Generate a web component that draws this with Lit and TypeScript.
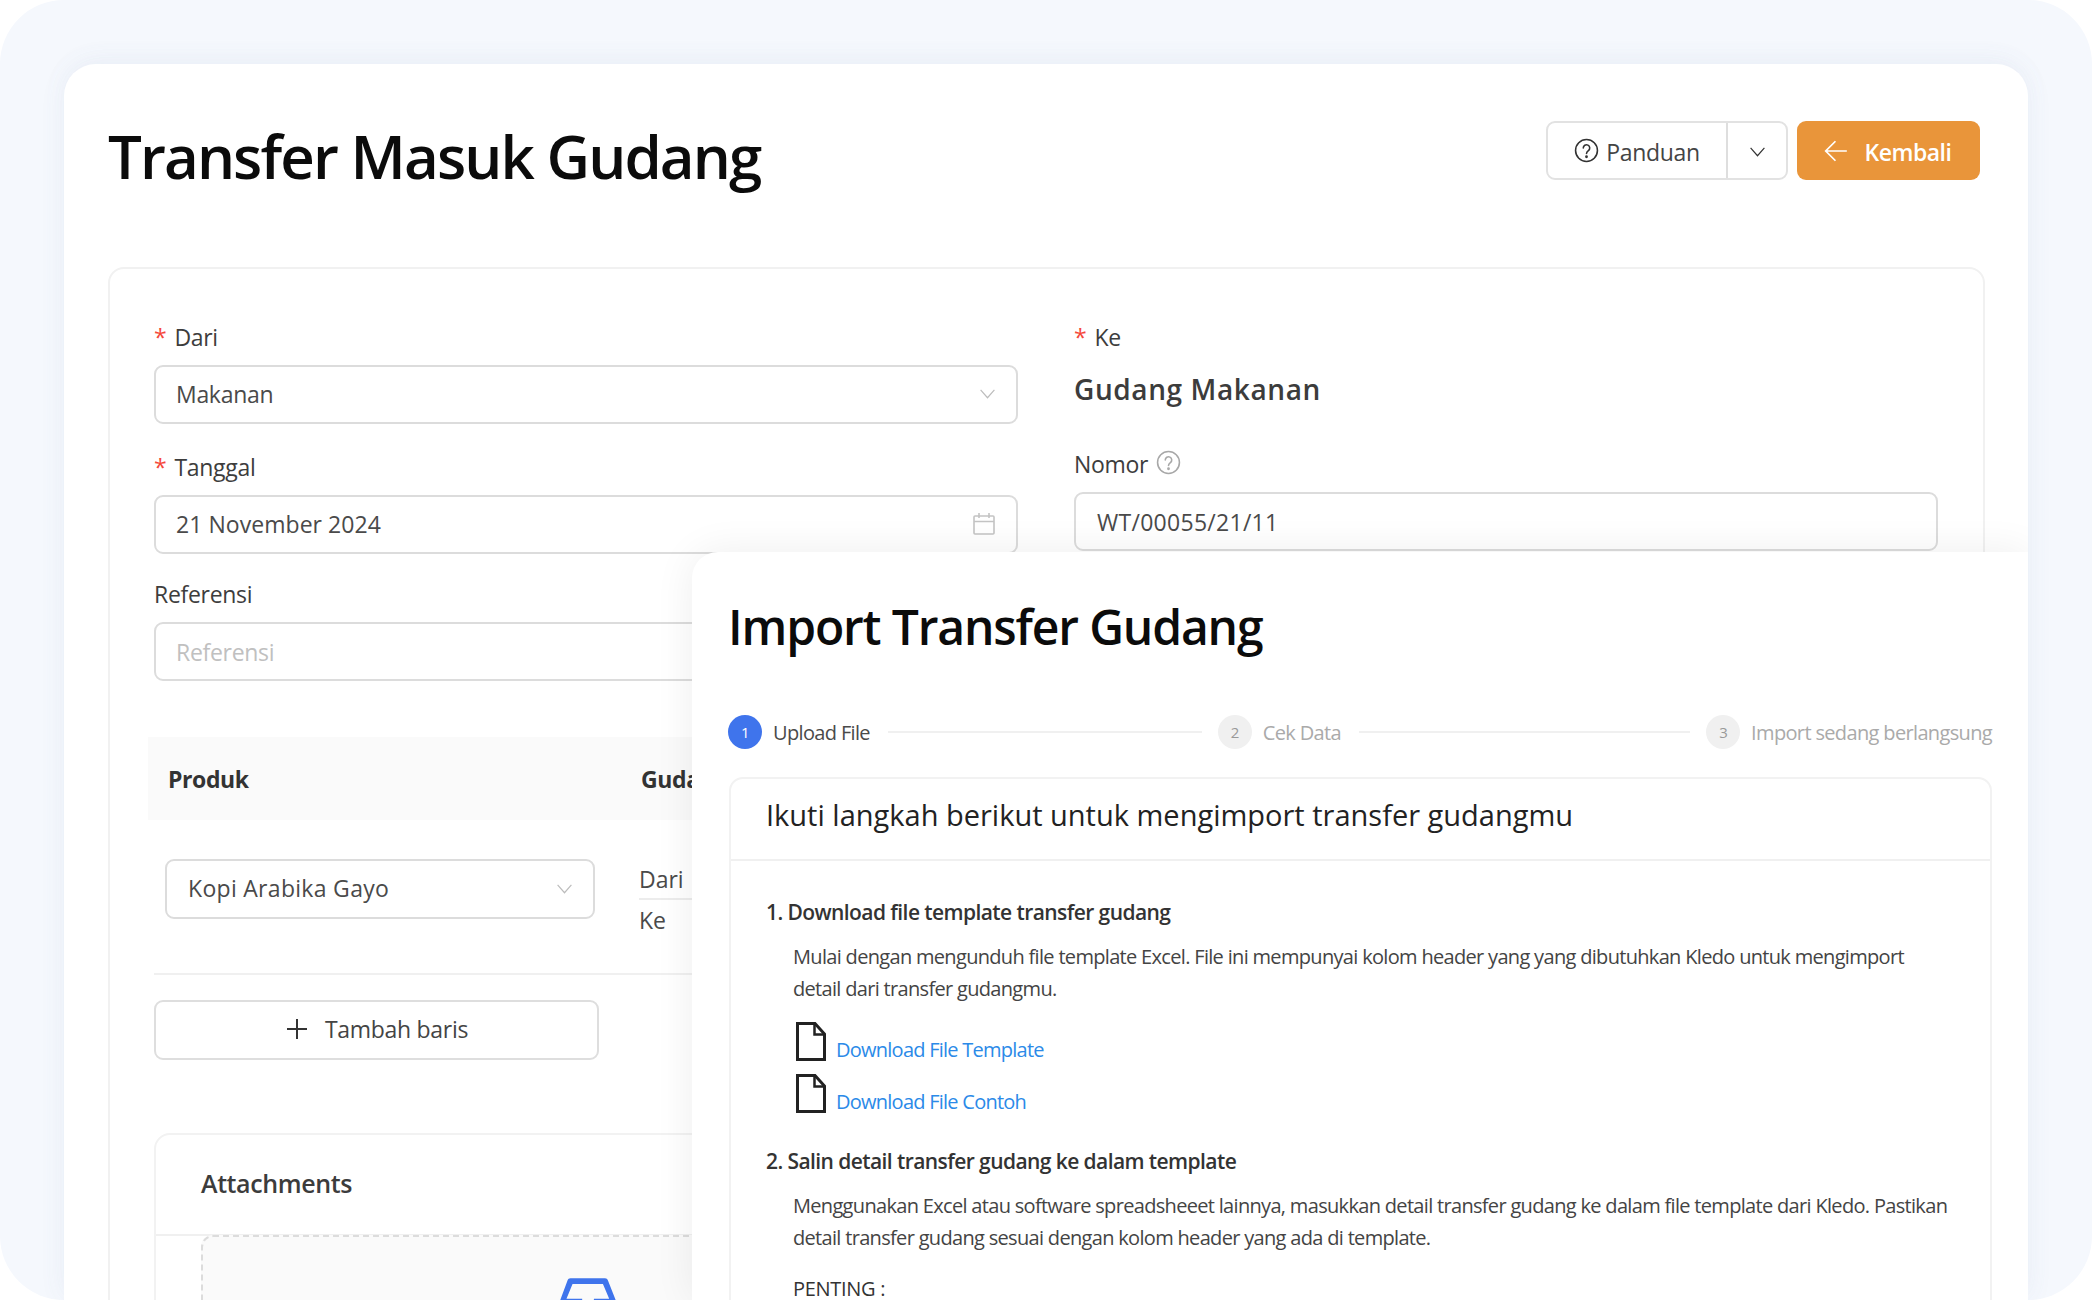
import { LitElement, html, css, svg } from "lit";
import { customElement } from "lit/decorators.js";

const chevron = (cls: string) => html`<svg class=${cls} viewBox="0 0 16 16" fill="none" stroke="currentColor" stroke-width="1.1"><path d="M1.5 4.5 8 12l6.5-7.5"/></svg>`;
const help = (cls: string) => html`<svg class=${cls} viewBox="0 0 24 24" fill="none" stroke="currentColor" stroke-width="1.5"><circle cx="12" cy="12" r="10.5"/><path d="M8.9 9.6a3.1 3.1 0 1 1 4.9 2.5c-1.1.8-1.8 1.4-1.8 2.8" stroke-linecap="round"/><circle cx="12" cy="18" r=".6" fill="currentColor"/></svg>`;
const fileIcon = html`<svg class="file" viewBox="0 0 30 39" fill="none" stroke="#222" stroke-width="3" stroke-linejoin="miter"><path d="M1.5 1.5H19L28.5 12V37.5H1.5Z"/><path d="M18.5 2V12.5H28" stroke-width="2.5"/></svg>`;
const inbox = svg`<path d="M885.2 446.3l-.2-.8-112.2-285.1c-5-16.1-19.9-27.2-36.8-27.2H281.2c-17 0-32.1 11.3-36.9 27.6L139.4 443l-.3.7-.2.8c-1.3 4.9-1.7 9.9-1 14.8-.1 1.6-.2 3.2-.2 4.8V830a60.9 60.9 0 0 0 60.8 60.8h627.2c33.5 0 60.8-27.3 60.9-60.8V464.1c0-1.3 0-2.6-.1-3.7.4-4.9 0-9.6-1.3-14.1zm-295.8-43l-.3 15.7c-.8 44.9-31.8 75.1-77.1 75.1-22.1 0-41.1-7.1-54.8-20.6S436 441.2 435.6 419l-.3-15.7H229.5L309 210h399.2l81.7 193.3H589.4zm-375 76.8h157.3c24.3 57.1 76 90.8 140.4 90.8 33.7 0 65-9.4 90.3-27.2 22.2-15.6 39.5-37.4 50.7-63.6h156.5V814H214.4V480.1z"/>`;

@customElement("app-root")
export class AppRoot extends LitElement {
  static styles = css`
    :host { display: block; width: 2092px; height: 1300px; overflow: hidden; background: #fff; font-family: "Open Sans", "Noto Sans", sans-serif; color: #3a3a3a; }
    * { box-sizing: border-box; }
    .frame { height: 1300px; background: #f5f8fd; border-radius: 64px; padding: 64px 64px 0; overflow: hidden; }
    .card { position: relative; height: 1236px; background: #fff; border-radius: 32px 32px 0 0; padding: 0 43px 0 44px; box-shadow: 0 -6px 24px rgba(120,140,180,.05), 0 0 30px rgba(120,140,180,.05); overflow: hidden; }
    .top { display: flex; justify-content: space-between; align-items: flex-start; height: 203px; }
    h1 { margin: 0; padding-top: 48px; font-size: 60px; line-height: 88px; font-weight: 600; color: #0b0b0b; letter-spacing: -1.9px; }
    .actions { display: flex; gap: 9px; padding-top: 57px; padding-right: 5px; }
    .group { display: flex; height: 59px; border: 2px solid #e2e2e2; border-radius: 9px; background: #fff; }
    .guide { width: 180px; padding-top: 2px; display: flex; align-items: center; justify-content: center; gap: 7px; font-size: 23px; color: #444; border-right: 2px solid #dedede; letter-spacing: -.3px; }
    .guide svg { width: 25px; height: 25px; color: #333; margin-top: -2px; }
    .more { width: 58px; padding-top: 2px; display: flex; align-items: center; justify-content: center; color: #333; }
    .more svg { width: 17px; height: 17px; }
    .back { width: 183px; height: 59px; padding-top: 2px; border-radius: 9px; background: #e9953a; color: #fff; display: flex; align-items: center; justify-content: center; gap: 16px; font-size: 23px; font-weight: 600; letter-spacing: -.5px; }
    .back svg { width: 26px; height: 26px; margin-top: -2px; }
    .back span { margin-right: 3px; }
    .panel { border: 2px solid #f1f1f1; border-radius: 16px; height: 1200px; padding: 50px 46px 0 44px; }
    .cols { display: grid; grid-template-columns: 864px 864px; column-gap: 56px; }
    .field { display: flex; flex-direction: column; }
    .label { height: 36px; line-height: 36px; font-size: 23px; color: #3d3d3d; display: flex; align-items: center; letter-spacing: -.3px; }
    .req { color: #f5483b; margin-right: 8px; font-size: 23px; }
    .input { height: 59px; border: 2px solid #dcdcdc; border-radius: 9px; display: flex; align-items: center; justify-content: space-between; padding: 0 20px 2px 20px; font-size: 23px; color: #4a4a4a; letter-spacing: -.3px; background: #fff; }
    .input.ph { color: #c0c0c0; padding-bottom: 0; }
    .input.date { letter-spacing: .05px; }
    .input.num-field { letter-spacing: .28px; padding-bottom: 0; padding-left: 21px; }
    .chev { width: 17px; height: 17px; color: #bcbcbc; }
    .cal { width: 24px; height: 24px; color: #c4c4c4; }
    .gap-l { margin-top: 25px; }
    .gap-s { margin-top: 22px; }
    .mt10 { margin-top: 10px; }
    .value { height: 48px; margin-top: 10px; line-height: 48px; font-size: 28px; font-weight: 600; color: #3c3c3c; letter-spacing: .6px; }
    .nomor { margin-top: 33px; }
    .nomor svg { width: 25px; height: 25px; color: #a8a8a8; margin-left: 8px; margin-top: -4px; }
    .thead { display: flex; align-items: center; height: 83px; margin: 56px 0 0 -6px; padding-left: 20px; background: #fafafa; font-size: 23px; font-weight: 700; color: #333; letter-spacing: -.4px; width: 1790px; }
    .thead span:first-child { width: 473px; }
    .tr { display: flex; height: 155px; padding: 39px 0 0 11px; border-bottom: 2px solid #f0f0f0; width: 1784px; }
    .tr .input { width: 430px; height: 60px; padding-left: 21px; letter-spacing: .3px; }
    .gud { margin-left: 44px; width: 300px; font-size: 23px; color: #4a4a4a; }
    .gud div { height: 41px; line-height: 40px; }
    .gud div:first-child { border-bottom: 2px solid #ececec; }
    .add { width: 445px; height: 60px; margin-top: 25px; padding-bottom: 2px; border: 2px solid #dedede; border-radius: 9px; display: flex; align-items: center; justify-content: center; gap: 16px; font-size: 23px; color: #444; letter-spacing: -.3px; }
    .add svg { width: 24px; height: 24px; }
    .attach { margin-top: 73px; border: 2px solid #f2f2f2; border-radius: 16px 16px 0 0; height: 400px; width: 1000px; }
    .attach-h { height: 101px; padding: 0 0 3px 45px; border-bottom: 2px solid #f0f0f0; display: flex; align-items: center; font-size: 25px; font-weight: 600; color: #3c3c3c; letter-spacing: -.4px; }
    .drop { margin: -1px 0 0 45px; width: 774px; height: 300px; border: 2px dashed #dcdcdc; border-radius: 12px; background: #fafafa; display: flex; justify-content: center; padding-top: 31px; }
    .drop svg { width: 78px; height: 78px; fill: #3f74ec; }
    .modal { position: absolute; left: 628px; top: 488px; right: 0; bottom: 0; background: #fff; border-radius: 26px 0 0 0; box-shadow: 0 0 40px rgba(0,0,0,.07); padding: 0 36px 0 36px; overflow: hidden; }
    h2 { margin: 0; padding-top: 40px; font-size: 48px; line-height: 70px; font-weight: 600; color: #0b0b0b; letter-spacing: -1.15px; }
    .steps { display: flex; align-items: center; height: 34px; margin-top: 53px; font-size: 20px; color: #aaa; letter-spacing: -.65px; white-space: nowrap; }
    .num { width: 34px; height: 34px; border-radius: 50%; flex: none; background: #f0f0f0; color: #999; font-size: 15px; display: flex; align-items: center; justify-content: center; margin-right: 11px; }
    .num.on { background: #3f74ec; color: #fff; }
    .steps .cur { color: #4a4a4a; }
    .line { height: 2px; background: #f0f0f0; margin: 0 16px 0 18px; }
    .l1 { flex: 310; }
    .l2 { flex: 327; }
    .box { margin-top: 28px; border: 2px solid #f2f2f2; border-radius: 14px 14px 0 0; height: 600px; margin-left: 1px; }
    .box-h { height: 82px; border-bottom: 2px solid #f0f0f0; padding: 0 0 10px 35px; display: flex; align-items: center; font-size: 29px; font-weight: 500; color: #222; letter-spacing: 0; }
    .body { padding: 35px 30px 0 35px; }
    h3 { margin: 0; font-size: 21px; line-height: 32px; font-weight: 600; color: #333; letter-spacing: -.58px; }
    .para { width: 1160px; margin: 13px 0 0 27px; font-size: 20px; line-height: 32px; color: #444; letter-spacing: -.68px; }
    .links { margin: 16px 0 0 30px; display: flex; flex-direction: column; gap: 12px; }
    .row { display: flex; align-items: flex-end; gap: 10px; height: 40px; }
    .file { width: 30px; height: 39px; flex: none; }
    .row span { font-size: 20px; line-height: 28px; margin-bottom: -3px; color: #2b8ae8; letter-spacing: -.75px; }
    .sec2 { margin-top: 32px; }
    .imp { margin: 19px 0 0 27px; font-size: 20px; line-height: 32px; color: #333; letter-spacing: -.3px; font-weight: 500; }
  `;

  render() {
    return html`
      <div class="frame">
        <div class="card">
          <div class="top">
            <h1>Transfer Masuk Gudang</h1>
            <div class="actions">
              <div class="group">
                <div class="guide">${help("")}<span>Panduan</span></div>
                <div class="more">${chevron("")}</div>
              </div>
              <div class="back">
                <svg viewBox="0 0 24 24" fill="none" stroke="currentColor" stroke-width="1.6"><path d="M22 12H2.5M11.5 3 2.5 12l9 9"/></svg>
                <span>Kembali</span>
              </div>
            </div>
          </div>
          <div class="panel">
            <div class="cols">
              <div class="field">
                <div class="label"><span class="req">*</span>Dari</div>
                <div class="input mt10"><span>Makanan</span>${chevron("chev")}</div>
                <div class="label gap-l"><span class="req">*</span>Tanggal</div>
                <div class="input mt10 date"><span>21 November 2024</span>
                  <svg class="cal" viewBox="0 0 24 24" fill="none" stroke="currentColor" stroke-width="1.6"><rect x="2" y="4" width="20" height="18" rx="1"/><path d="M2 9.5h20M7 1v5M17 1v5"/></svg>
                </div>
                <div class="label gap-s">Referensi</div>
                <div class="input mt10 ph"><span>Referensi</span></div>
              </div>
              <div class="field">
                <div class="label"><span class="req">*</span>Ke</div>
                <div class="value">Gudang Makanan</div>
                <div class="label nomor">Nomor${help("")}</div>
                <div class="input mt10 num-field"><span>WT/00055/21/11</span></div>
              </div>
            </div>
            <div class="thead"><span>Produk</span><span>Gudang</span></div>
            <div class="tr">
              <div class="input"><span>Kopi Arabika Gayo</span>${chevron("chev")}</div>
              <div class="gud"><div>Dari</div><div>Ke</div></div>
            </div>
            <div class="add">
              <svg viewBox="0 0 24 24" fill="none" stroke="#333" stroke-width="2"><path d="M12 2v20M2 12h20"/></svg>
              <span>Tambah baris</span>
            </div>
            <div class="attach">
              <div class="attach-h">Attachments</div>
              <div class="drop"><svg viewBox="0 0 1024 1024">${inbox}</svg></div>
            </div>
          </div>
          <div class="modal">
            <h2>Import Transfer Gudang</h2>
            <div class="steps">
              <div class="num on">1</div><span class="cur">Upload File</span>
              <div class="line l1"></div>
              <div class="num">2</div><span>Cek Data</span>
              <div class="line l2"></div>
              <div class="num">3</div><span>Import sedang berlangsung</span>
            </div>
            <div class="box">
              <div class="box-h">Ikuti langkah berikut untuk mengimport transfer gudangmu</div>
              <div class="body">
                <h3>1. Download file template transfer gudang</h3>
                <p class="para">Mulai dengan mengunduh file template Excel. File ini mempunyai kolom header yang yang dibutuhkan Kledo untuk mengimport detail dari transfer gudangmu.</p>
                <div class="links">
                  <div class="row">${fileIcon}<span>Download File Template</span></div>
                  <div class="row">${fileIcon}<span>Download File Contoh</span></div>
                </div>
                <h3 class="sec2">2. Salin detail transfer gudang ke dalam template</h3>
                <p class="para">Menggunakan Excel atau software spreadsheeet lainnya, masukkan detail transfer gudang ke dalam file template dari Kledo. Pastikan detail transfer gudang sesuai dengan kolom header yang ada di template.</p>
                <div class="imp">PENTING :</div>
              </div>
            </div>
          </div>
        </div>
      </div>
    `;
  }
}
